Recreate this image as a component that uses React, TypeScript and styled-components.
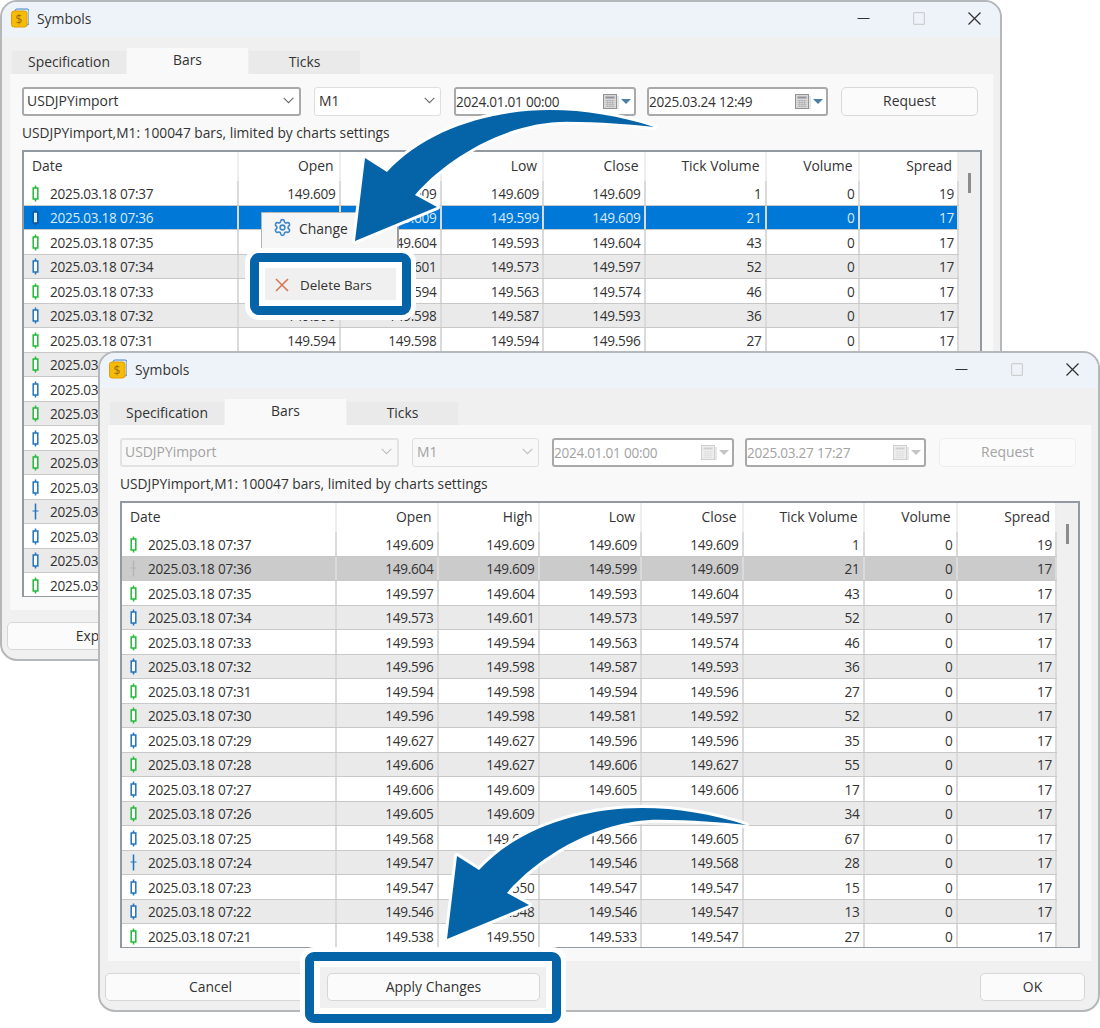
import styled, { createGlobalStyle } from "styled-components";
import { Settings } from "lucide-react";

const GlobalStyle = createGlobalStyle`
  * {
    box-sizing: border-box;
  }
  html,
  body {
    margin: 0;
    background: #fff;
  }
  body {
    font-family: "Open Sans", "Noto Sans", sans-serif;
    font-size: 13.9px;
    color: #333;
  }
`;

const COLUMNS = "214.5px 102px 101px 102.5px 101.5px 121px 93px 99.5px";

const Desktop = styled.div`
  position: relative;
  width: 1100px;
  height: 1028px;
  overflow: hidden;
`;

const Frame = styled.section<{ $left: number; $top: number }>`
  position: absolute;
  left: ${(p) => p.$left}px;
  top: ${(p) => p.$top}px;
  width: 1002px;
  height: 661px;
  display: flex;
  flex-direction: column;
  background: #f0f0f0;
  border: 2px solid #b5b8ba;
  border-radius: 17px;
  overflow: hidden;
`;

const TitleBar = styled.header`
  height: 35px;
  flex: none;
  display: flex;
  align-items: center;
  padding: 0 0 3px 9px;
  gap: 8px;
  background: #eef3fa;
`;

const TitleText = styled.span`
  flex: 1;
`;

const WindowControls = styled.div`
  display: flex;
  align-items: center;
  gap: 43px;
  padding-right: 19px;
`;

const TabStrip = styled.nav`
  height: 37px;
  flex: none;
  display: flex;
  align-items: flex-end;
  padding-left: 9px;
`;

const Tab = styled.div<{ $active?: boolean; $width: number }>`
  width: ${(p) => p.$width}px;
  height: ${(p) => (p.$active ? 26 : 24)}px;
  display: flex;
  align-items: center;
  justify-content: center;
  padding-bottom: ${(p) => (p.$active ? 4 : 2)}px;
  background: ${(p) => (p.$active ? "#f9f9f9" : "#eaeaea")};
  border: 1px solid ${(p) => (p.$active ? "#f9f9f9" : "#efefef")};
  border-bottom: 0;
`;

const Panel = styled.div`
  height: 536px;
  flex: none;
  margin: 0 6px 0 8px;
  padding: 13px 0 0 12px;
  background: #f9f9f9;
  border-right: 1px solid #f2f2f2;
`;

const Controls = styled.div`
  display: flex;
  gap: 13px;
`;

const DateRange = styled.div`
  display: flex;
  gap: 11px;
`;

const Field = styled.div<{ $width: number; $disabled?: boolean; $quiet?: boolean }>`
  width: ${(p) => p.$width}px;
  height: 29px;
  display: flex;
  align-items: center;
  justify-content: space-between;
  padding: 0 5px 2px ${(p) => (p.$quiet ? 4 : 3)}px;
  background: ${(p) => (p.$disabled ? "#f8f8f8" : "#fff")};
  border: ${(p) => (p.$quiet ? "1px solid #dedede" : "2px solid #a9a9a9")};
  border-radius: 3px;
  color: ${(p) => (p.$disabled ? "#a3a3a3" : "#333")};
`;

const DisabledCombo = styled(Field)`
  border: 2px solid #e2e2e2;
`;

const DateField = styled(Field)`
  background: #fff;
  padding: 0 1px 1px 0;
  font-size: 13.6px;
  letter-spacing: -0.27px;
`;

const RequestButton = styled.button<{ $disabled?: boolean }>`
  width: 137px;
  height: 29px;
  padding: 0 0 2px;
  font: inherit;
  background: #fbfbfb;
  border: 1px solid ${(p) => (p.$disabled ? "#eeeeee" : "#d9d9d9")};
  border-radius: 5px;
  color: ${(p) => (p.$disabled ? "#a3a3a3" : "#333")};
`;

const InfoLine = styled.p`
  height: 34px;
  margin: 0;
  padding-bottom: 2px;
  display: flex;
  align-items: center;
  font-size: 13.75px;
`;

const TableFrame = styled.div`
  width: 960px;
  height: 447px;
  display: flex;
  background: #fff;
  border: 2px solid #9299a0;
  border-bottom-width: 1px;
  overflow: hidden;
`;

const TableBody = styled.div`
  width: 935px;
  flex: none;
`;

const HeaderRow = styled.div`
  height: 29px;
  display: grid;
  grid-template-columns: ${COLUMNS};
  background: #fff;
`;

const HeaderCell = styled.div<{ $left?: boolean }>`
  display: flex;
  align-items: center;
  justify-content: ${(p) => (p.$left ? "flex-start" : "flex-end")};
  padding: 0 5px 2px 8px;
  border-right: 2px solid #eeeeee;
`;

const DataRow = styled.div<{ $tone: "plain" | "alt" | "active" | "inactive" }>`
  height: 24.5px;
  display: grid;
  grid-template-columns: ${COLUMNS};
  padding-top: 1px;
  border-bottom: 1px solid #c8c8c8;
  font-size: 13.6px;
  letter-spacing: -0.27px;
  background: ${(p) =>
    ({ plain: "#fff", alt: "#eaeaea", active: "#0078d7", inactive: "#cbcbcb" })[p.$tone]};
  color: ${(p) => (p.$tone === "active" ? "#dbeaf8" : "#333")};
`;

const DateCell = styled.div`
  display: flex;
  align-items: center;
  gap: 11px;
  padding-left: 8px;
  margin-top: -1px;
  padding-top: 1px;
  border-right: 2px solid #dadada;
`;

const NumberCell = styled.div`
  display: flex;
  align-items: center;
  justify-content: flex-end;
  padding: 1px 3px 0 0;
  margin-top: -1px;
  border-right: 2px solid #dadada;
`;

const ScrollTrack = styled.div`
  flex: 1;
  padding: 21px 0 0 9px;
  background: #f0f0f0;
`;

const ScrollThumb = styled.div`
  width: 3px;
  height: 20px;
  background: #8c8c8c;
`;

const Footer = styled.footer`
  flex: 1;
  display: flex;
  gap: 11px;
  padding: 12px 0 0 5px;
`;

const FooterButton = styled.button<{ $width: number; $push?: boolean }>`
  width: ${(p) => p.$width}px;
  height: 28px;
  margin-left: ${(p) => (p.$push ? "auto" : "0")};
  margin-right: ${(p) => (p.$push ? "13px" : "0")};
  padding: 0 0 1px;
  font: inherit;
  color: #333;
  background: #fbfbfb;
  border: 1px solid #d6d6d6;
  border-radius: 5px;
`;

const ContextMenu = styled.div`
  position: absolute;
  left: 261px;
  top: 212px;
  width: 138px;
  height: 50px;
  padding: 5px 0 0 11px;
  display: flex;
  gap: 7px;
  background: #f6f6f6;
  border: 1px solid #b4b4b4;
  border-right: 2px solid #9c9c9c;
  color: #333;
`;

const MenuLabel = styled.span`
  line-height: 22px;
`;

const Highlight = styled.div<{ $left: number; $top: number; $width: number; $height: number }>`
  position: absolute;
  left: ${(p) => p.$left}px;
  top: ${(p) => p.$top}px;
  width: ${(p) => p.$width}px;
  height: ${(p) => p.$height}px;
  padding: 6px;
  border: 9px solid #0563a8;
  border-radius: 9px;
  box-shadow: 0 0 0 5px #fff, inset 0 0 0 6px #fff;
`;

const DeleteItem = styled.div`
  height: 100%;
  display: flex;
  align-items: center;
  gap: 11px;
  padding: 1px 0 0 10px;
  font-size: 13.4px;
  background: #f0f0f0;
`;

const ArrowLayer = styled.svg`
  position: absolute;
  left: 0;
  top: 0;
  width: 1100px;
  height: 1028px;
  pointer-events: none;
`;

type CandleKind = "up" | "down" | "doji" | "activeBar" | "fadedDoji";

const CANDLE_COLORS: Record<CandleKind, string> = {
  up: "#1fbb35",
  down: "#1f74be",
  doji: "#1f74be",
  activeBar: "#0a56a0",
  fadedDoji: "#b4b4b4",
};

const Candle = ({ kind }: { kind: CandleKind }) => {
  const color = CANDLE_COLORS[kind];
  const isCross = kind === "doji" || kind === "fadedDoji";
  return (
    <svg width="7" height="17" viewBox="0 0 7 17" fill="none" stroke={color} strokeWidth="1.5">
      <line x1="3.5" y1="0.5" x2="3.5" y2="16.5" />
      {isCross ? (
        <line x1="0.5" y1="8" x2="6.5" y2="8" strokeWidth="1" />
      ) : (
        <rect x="1.2" y="3" width="4.6" height="11" fill={kind === "activeBar" ? "#d9ecfb" : "#fff"} />
      )}
    </svg>
  );
};

const SymbolIcon = () => (
  <svg width="18" height="20" viewBox="0 0 18 20">
    <rect x="4" y="1" width="14" height="16" rx="2" fill="#dce9f5" stroke="#3f86c6" strokeWidth="1" />
    <rect x="0.5" y="3" width="15.5" height="16" rx="2.5" fill="#f5bb05" stroke="#e39c00" strokeWidth="1" />
    <text x="8" y="15.5" fontSize="12" textAnchor="middle" fill="#9a6a10" fontFamily="Open Sans, sans-serif">
      $
    </text>
  </svg>
);

const Chevron = ({ faded }: { faded?: boolean }) => (
  <svg width="11" height="7" viewBox="0 0 11 7" fill="none" stroke={faded ? "#bdbdbd" : "#6b6b6b"} strokeWidth="1.1">
    <path d="M0.7 0.8 5.5 5.6 10.3 0.8" />
  </svg>
);

const CalendarPicker = ({ faded }: { faded?: boolean }) => {
  const line = faded ? "#cfcfcf" : "#8f9499";
  return (
    <svg width="30" height="17" viewBox="0 0 30 17">
      <rect x="0.5" y="1.5" width="13" height="14" fill={faded ? "#eeeeee" : "#d8d8d8"} stroke={line} />
      <rect x="2.5" y="3.5" width="9" height="2" fill={line} />
      <path d="M2.5 7.5h9M2.5 9.5h9M2.5 11.5h9M2.5 13.5h9M4.5 7v7M7 7v7M9.5 7v7" stroke={faded ? "#e0e0e0" : "#b0b0b0"} strokeWidth="0.7" />
      <rect x="14" y="3" width="2" height="13" fill="#e6e6e6" />
      <path d="M18 6h10l-5 5z" fill={faded ? "#c4c4c4" : "#4d7ea6"} />
    </svg>
  );
};

const WindowButtons = () => (
  <WindowControls>
    <svg width="13" height="13" viewBox="0 0 13 13" stroke="#333" strokeWidth="1.2">
      <line x1="0.5" y1="6.5" x2="12.5" y2="6.5" />
    </svg>
    <svg width="12" height="13" viewBox="0 0 12 13" fill="none" stroke="#cfcfcf" strokeWidth="1.2">
      <rect x="0.6" y="0.6" width="10.8" height="11.8" rx="1" />
    </svg>
    <svg width="13" height="13" viewBox="0 0 13 13" stroke="#333" strokeWidth="1.3">
      <path d="M0.5 0.5 12.5 12.5M12.5 0.5 0.5 12.5" />
    </svg>
  </WindowControls>
);

const HEADERS = ["Open", "High", "Low", "Close", "Tick Volume", "Volume", "Spread"];

interface IBar {
  time: string;
  candle: CandleKind;
  values: (string | number)[];
}

const BARS: IBar[] = [
  { time: "07:37", candle: "up", values: ["149.609", "149.609", "149.609", "149.609", 1, 0, 19] },
  { time: "07:36", candle: "doji", values: ["149.604", "149.609", "149.599", "149.609", 21, 0, 17] },
  { time: "07:35", candle: "up", values: ["149.597", "149.604", "149.593", "149.604", 43, 0, 17] },
  { time: "07:34", candle: "down", values: ["149.573", "149.601", "149.573", "149.597", 52, 0, 17] },
  { time: "07:33", candle: "up", values: ["149.593", "149.594", "149.563", "149.574", 46, 0, 17] },
  { time: "07:32", candle: "down", values: ["149.596", "149.598", "149.587", "149.593", 36, 0, 17] },
  { time: "07:31", candle: "up", values: ["149.594", "149.598", "149.594", "149.596", 27, 0, 17] },
  { time: "07:30", candle: "up", values: ["149.596", "149.598", "149.581", "149.592", 52, 0, 17] },
  { time: "07:29", candle: "down", values: ["149.627", "149.627", "149.596", "149.596", 35, 0, 17] },
  { time: "07:28", candle: "up", values: ["149.606", "149.627", "149.606", "149.627", 55, 0, 17] },
  { time: "07:27", candle: "down", values: ["149.606", "149.609", "149.605", "149.606", 17, 0, 17] },
  { time: "07:26", candle: "up", values: ["149.605", "149.609", "", "", 34, 0, 17] },
  { time: "07:25", candle: "down", values: ["149.568", "149.605", "149.566", "149.605", 67, 0, 17] },
  { time: "07:24", candle: "doji", values: ["149.547", "149.568", "149.546", "149.568", 28, 0, 17] },
  { time: "07:23", candle: "down", values: ["149.547", "149.550", "149.547", "149.547", 15, 0, 17] },
  { time: "07:22", candle: "down", values: ["149.546", "149.548", "149.546", "149.547", 13, 0, 17] },
  { time: "07:21", candle: "up", values: ["149.538", "149.550", "149.533", "149.547", 27, 0, 17] },
];

interface ISymbolsWindowProps {
  left: number;
  top: number;
  disabled?: boolean;
  endDate: string;
  buttons: { label: string; width: number; push?: boolean }[];
}

const SymbolsWindow = ({ left, top, disabled, endDate, buttons }: ISymbolsWindowProps) => {
  const Combo = disabled ? DisabledCombo : Field;
  return (
    <Frame $left={left} $top={top}>
      <TitleBar>
        <SymbolIcon />
        <TitleText>Symbols</TitleText>
        <WindowButtons />
      </TitleBar>
      <TabStrip>
        <Tab $width={116}>Specification</Tab>
        <Tab $width={121} $active>Bars</Tab>
        <Tab $width={113}>Ticks</Tab>
      </TabStrip>
      <Panel>
        <Controls>
          <Combo $width={279} $disabled={disabled}>
            USDJPYimport
            <Chevron faded={disabled} />
          </Combo>
          <Field $width={127} $disabled={disabled} $quiet>
            M1
            <Chevron faded={disabled} />
          </Field>
          <DateRange>
            <DateField $width={182} $disabled={disabled}>
              2024.01.01 00:00
              <CalendarPicker faded={disabled} />
            </DateField>
            <DateField $width={181} $disabled={disabled}>
              {endDate}
              <CalendarPicker faded={disabled} />
            </DateField>
          </DateRange>
          <RequestButton $disabled={disabled}>Request</RequestButton>
        </Controls>
        <InfoLine>USDJPYimport,M1: 100047 bars, limited by charts settings</InfoLine>
        <TableFrame>
          <TableBody>
            <HeaderRow>
              <HeaderCell $left>Date</HeaderCell>
              {HEADERS.map((header) => (
                <HeaderCell key={header}>{header}</HeaderCell>
              ))}
            </HeaderRow>
            {BARS.map((bar, index) => {
              const isSelected = index === 1;
              const selectedTone = disabled ? "inactive" : "active";
              const selectedCandle = disabled ? "fadedDoji" : "activeBar";
              return (
                <DataRow key={bar.time} $tone={isSelected ? selectedTone : index % 2 ? "alt" : "plain"}>
                  <DateCell>
                    <Candle kind={isSelected ? selectedCandle : bar.candle} />
                    2025.03.18 {bar.time}
                  </DateCell>
                  {bar.values.map((value, column) => (
                    <NumberCell key={column}>{value}</NumberCell>
                  ))}
                </DataRow>
              );
            })}
          </TableBody>
          <ScrollTrack>
            <ScrollThumb />
          </ScrollTrack>
        </TableFrame>
      </Panel>
      <Footer>
        {buttons.map((button) => (
          <FooterButton key={button.label} $width={button.width} $push={button.push}>
            {button.label}
          </FooterButton>
        ))}
      </Footer>
    </Frame>
  );
};

const CurvedArrow = ({ dx, dy }: { dx: number; dy: number }) => (
  <path
    transform={`translate(${dx} ${dy})`}
    d="M654 127C620 116 585 110 550 110C490 110 425 130 387 172L365 158L355 241L437 207L415 195C440 165 500 121.7 567 121.7C600 122 630 124 654 127Z"
    fill="#0563a8"
    stroke="#fff"
    strokeWidth="6"
    strokeLinejoin="round"
    paintOrder="stroke"
  />
);

const App = () => {
  return (
    <Desktop>
      <GlobalStyle />
      <SymbolsWindow
        left={0}
        top={0}
        endDate="2025.03.24 12:49"
        buttons={[{ label: "Export", width: 180 }]}
      />
      <ContextMenu>
        <Settings size={19} color="#3d88c9" strokeWidth={2} />
        <MenuLabel>Change</MenuLabel>
      </ContextMenu>
      <SymbolsWindow
        left={98}
        top={351}
        disabled
        endDate="2025.03.27 17:27"
        buttons={[
          { label: "Cancel", width: 211 },
          { label: "Apply Changes", width: 213 },
          { label: "OK", width: 105, push: true },
        ]}
      />
      <ArrowLayer viewBox="0 0 1100 1028">
        <CurvedArrow dx={0} dy={0} />
        <CurvedArrow dx={92} dy={698} />
      </ArrowLayer>
      <Highlight $left={250} $top={253} $width={161} $height={62}>
        <DeleteItem>
          <svg width="14" height="14" viewBox="0 0 14 14" stroke="#d6764f" strokeWidth="1.5">
            <path d="M1 1 13 13M13 1 1 13" />
          </svg>
          Delete Bars
        </DeleteItem>
      </Highlight>
      <Highlight $left={305} $top={952} $width={256} $height={71} />
    </Desktop>
  );
};

export default App;
